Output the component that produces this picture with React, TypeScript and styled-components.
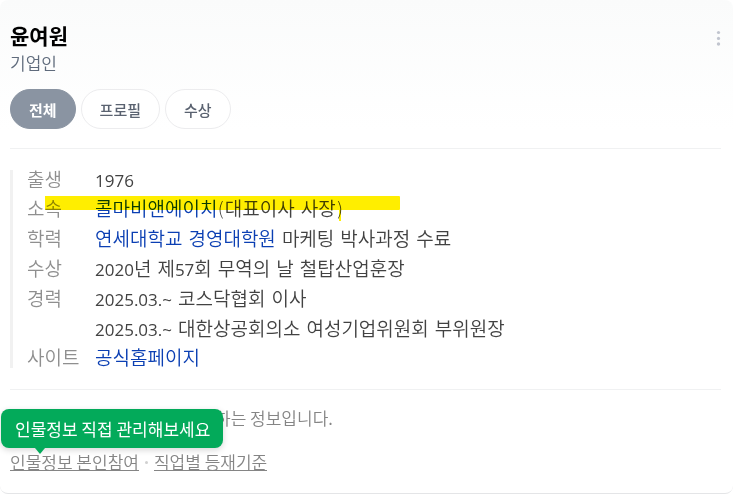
import React from "react";
import styled, { createGlobalStyle } from "styled-components";

const GlobalStyle = createGlobalStyle`
  *, *::before, *::after { box-sizing: border-box; }
  body {
    margin: 0;
    background: #fff;
    color: #424242;
    font-family: "Noto Sans CJK KR", "Liberation Sans", sans-serif;
  }
  h1, p, dl, dd { margin: 0; }
  a { color: inherit; }
`;

const Card = styled.article`
  padding: 19px 12px 22px 10px;
  border-bottom: 1px solid #e4e5e7;
  border-radius: 8px;
  background: linear-gradient(#fafbfb, #fff 130px);
`;

const Header = styled.header`
  display: flex;
  justify-content: space-between;
  align-items: flex-start;
`;

const Name = styled.h1`
  font-size: 21px;
  line-height: 32px;
  font-weight: 700;
  color: #000;
`;

const Job = styled.p`
  font-size: 17px;
  line-height: 24px;
  font-weight: 350;
  color: #5f6b7c;
`;

const MoreButton = styled.button`
  display: flex;
  margin-top: 9px;
  padding: 0;
  border: 0;
  background: none;
  cursor: pointer;
`;

const Tabs = styled.nav`
  display: flex;
  gap: 5px;
  margin-top: 14px;
  padding-bottom: 19px;
  border-bottom: 1px solid #f0f1f2;
`;

const Tab = styled.button<{ $active?: boolean }>`
  height: 40px;
  padding: 0 18px;
  border: 1px solid ${(p) => (p.$active ? "#8a94a2" : "#ececee")};
  border-radius: 20px;
  background: ${(p) => (p.$active ? "#8a94a2" : "#fff")};
  color: ${(p) => (p.$active ? "#fff" : "#5a6270")};
  font-family: inherit;
  font-size: 15px;
  font-weight: ${(p) => (p.$active ? 700 : 500)};
  cursor: pointer;
`;

const Facts = styled.dl`
  position: relative;
  display: grid;
  grid-template-columns: 68px 1fr;
  margin: 21px 0;
  padding-left: 14px;
  border-left: 3px solid #f1f1f1;
  font-family: "DejaVu Sans", "Noto Sans CJK KR", sans-serif;
  font-size: 19px;
  font-weight: 350;
`;

const Term = styled.dt`
  line-height: 20px;
  color: #8f8f8f;
`;

const Detail = styled.dd`
  line-height: 20px;
  padding-bottom: 10px;

  &:first-of-type, &:nth-last-of-type(2) { padding-bottom: 9px; }
  &:last-of-type { padding-bottom: 0; }
`;

const Figure = styled.span`
  font-family: "Open Sans", sans-serif;
  font-size: 17px;
  font-weight: 400;
  line-height: 0;
`;

const FactLink = styled.a`
  color: #0b3fb3;
  text-decoration: none;
`;

const Marker = styled.span`
  position: absolute;
  top: 26px;
  left: 32px;
  width: 355px;
  height: 14px;
  border-radius: 0 1px 1px 0;
  background: #ffee00;
  mix-blend-mode: multiply;

  &::after {
    content: "";
    position: absolute;
    top: 14px;
    left: 294px;
    width: 2px;
    height: 11px;
    background: #ffee00;
  }
`;

const Footer = styled.footer`
  position: relative;
  padding-top: 16px;
  border-top: 1px solid #f0f1f2;
  color: #858585;
  font-size: 17px;
  font-weight: 350;
  line-height: 24px;
`;

const Note = styled.p`
  padding-left: 205px;
`;

const Links = styled.p`
  display: flex;
  align-items: center;
  gap: 6px;
  margin-top: 23px;
`;

const FooterLink = styled.a`
  text-decoration: none;
  border-bottom: 1px solid #858585;
  line-height: 17px;
`;

const Dot = styled.span`
  width: 3px;
  height: 3px;
  border-radius: 50%;
  background: #d0d0d0;
`;

const Tip = styled.div`
  position: absolute;
  top: 19px;
  left: -9px;
  padding: 0 13px 0 14px;
  border-radius: 8px;
  background: #03aa5a;
  box-shadow: 0 2px 6px rgba(0, 0, 0, 0.16);
  color: #fff;
  font-weight: 400;
  line-height: 39px;
  white-space: nowrap;

  &::after {
    content: "";
    position: absolute;
    top: 100%;
    left: 34px;
    border: 5px solid transparent;
    border-top: 6px solid #03aa5a;
    border-bottom: 0;
  }
`;

const MoreIcon = () => (
  <svg width="5" height="18" viewBox="0 0 5 18" fill="#c1c5cf" aria-hidden="true">
    <circle cx="2.5" cy="4.5" r="1.6" />
    <circle cx="2.5" cy="10.4" r="1.6" />
    <circle cx="2.5" cy="16" r="1.7" />
  </svg>
);

export default function App() {
  return (
    <>
      <GlobalStyle />
      <Card>
        <Header>
          <div>
            <Name>윤여원</Name>
            <Job>기업인</Job>
          </div>
          <MoreButton type="button" aria-label="더보기">
            <MoreIcon />
          </MoreButton>
        </Header>
        <Tabs>
          <Tab type="button" $active>전체</Tab>
          <Tab type="button">프로필</Tab>
          <Tab type="button">수상</Tab>
        </Tabs>
        <Facts>
          <Term>출생</Term>
          <Detail><Figure>1976</Figure></Detail>
          <Term>소속</Term>
          <Detail><FactLink href="#company">콜마비앤에이치</FactLink>(대표이사 사장)</Detail>
          <Term>학력</Term>
          <Detail><FactLink href="#school">연세대학교 경영대학원</FactLink> 마케팅 박사과정 수료</Detail>
          <Term>수상</Term>
          <Detail><Figure>2020</Figure>년 제<Figure>57</Figure>회 무역의 날 철탑산업훈장</Detail>
          <Term>경력</Term>
          <Detail><Figure>2025.03.~</Figure> 코스닥협회 이사</Detail>
          <Term aria-hidden="true" />
          <Detail><Figure>2025.03.~</Figure> 대한상공회의소 여성기업위원회 부위원장</Detail>
          <Term>사이트</Term>
          <Detail><FactLink href="#site">공식홈페이지</FactLink></Detail>
          <Marker />
        </Facts>
        <Footer>
          <Note>하는 정보입니다.</Note>
          <Links>
            <FooterLink href="#join">인물정보 본인참여</FooterLink>
            <Dot />
            <FooterLink href="#criteria">직업별 등재기준</FooterLink>
          </Links>
          <Tip role="tooltip">인물정보 직접 관리해보세요</Tip>
        </Footer>
      </Card>
    </>
  );
}
